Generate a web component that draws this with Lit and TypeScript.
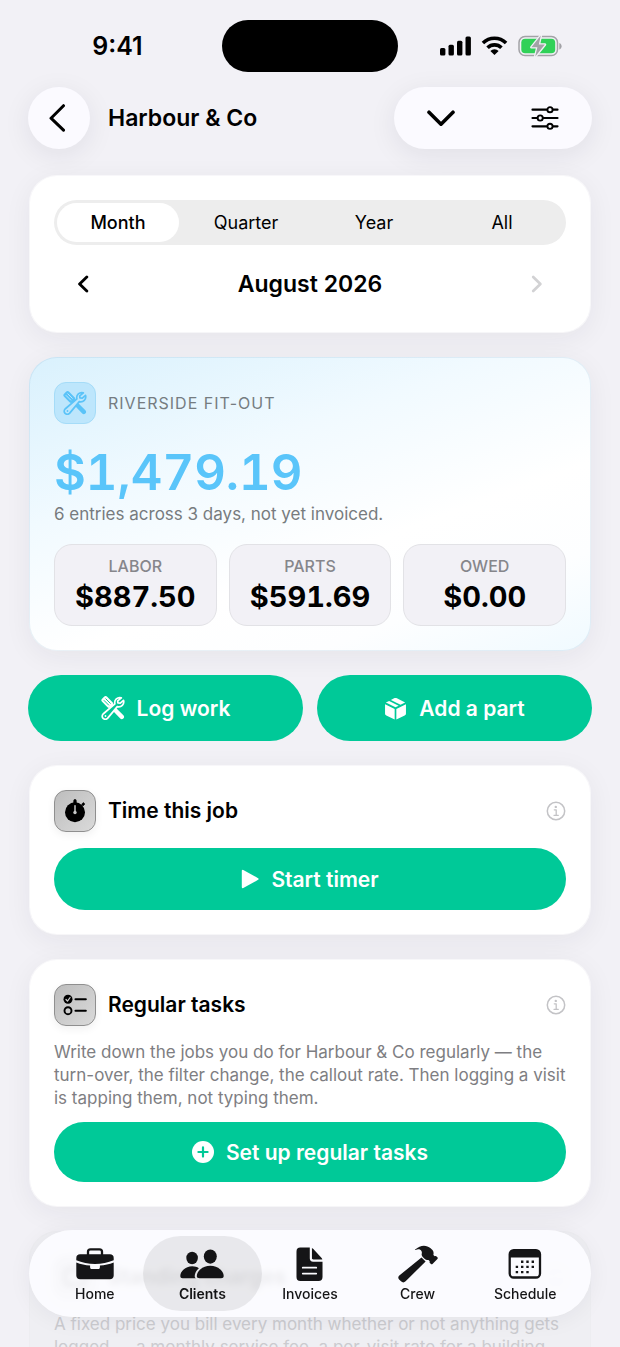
import { LitElement, html, css, svg, nothing, type TemplateResult } from "lit";
import { customElement, property, state } from "lit/decorators.js";
import { classMap } from "lit/directives/class-map.js";

const tools = svg`
  <path d="M10.6 10.6 14 14" stroke="currentColor" stroke-width="2" fill="none"/>
  <path d="M14.8 14.800 20.800 20.900" stroke="currentColor" stroke-width="4.400" stroke-linecap="round" fill="none"/>
  <g transform="rotate(45 6.300 6)">
    <rect x="0.300" y="2.400" width="12" height="7.200" rx="2.200" fill="currentColor"/>
    <path d="M3 4.800h6.400M3 7.200h6.400" fill="none" stroke="var(--cut, #fff)" stroke-width="0.900" stroke-linecap="round"/>
  </g>
  <path fill="var(--cut, #fff)" stroke="currentColor" stroke-width="1.700" stroke-linejoin="round" stroke-linecap="round"
    d="M20.400 1.900a5 5 0 0 0-6.500 6L2.100 18a3.100 3.100 0 1 0 4.400 4.400L16.300 10.600a5 5 0 0 0 6.200-6.300L19.300 7.200 16.900 6.900 16.700 4.800Z"/>
  <circle cx="4.500" cy="20" r="0.900" fill="currentColor"/>`;

const icons: Record<string, { box: string; art: TemplateResult }> = {
  signal: {
    box: "0 0 31 20",
    art: svg`<g fill="currentColor"><rect x="0" y="12" width="5.400" height="7.600" rx="1.500"/><rect x="8.500" y="8.700" width="5.400" height="10.900" rx="1.500"/><rect x="17" y="4.700" width="5.400" height="14.900" rx="1.500"/><rect x="25.500" y="0.400" width="5.400" height="19.200" rx="1.500"/></g>`,
  },
  wifi: {
    box: "0 0 28 20",
    art: svg`<g fill="none" stroke="currentColor" stroke-width="3.700"><path d="M2 7.300a17 17 0 0 1 24 0"/><path d="M6.800 12.200a10.200 10.200 0 0 1 14.400 0"/></g><path fill="currentColor" d="M14 19.800 9.700 15.500a6.200 6.200 0 0 1 8.600 0Z"/>`,
  },
  battery: {
    box: "0 0 44 22",
    art: svg`<rect x="1" y="1.500" width="38.500" height="19" rx="6" fill="none" stroke="#a2a2a6" stroke-width="1.500"/><path d="M41.300 8v6.400c1.500-.5 2.300-1.700 2.300-3.200S42.800 8.500 41.300 8Z" fill="#a2a2a6"/><rect x="3.300" y="3.800" width="33.900" height="14.400" rx="3.800" fill="#30d158"/><path d="M22.800.6 13.400 12.300h6l-2.200 9.300 9.700-12h-6.100Z" fill="#a2a2a6" stroke="#f2f1f6" stroke-width="2.600" paint-order="stroke" stroke-linejoin="round"/>`,
  },
  back: {
    box: "0 0 20 28",
    art: svg`<path d="M14.500 2.500 2 15 14.500 27" transform="translate(0 -.8)" fill="none" stroke="currentColor" stroke-width="3" stroke-linecap="round" stroke-linejoin="round"/>`,
  },
  down: {
    box: "0 0 28 17",
    art: svg`<path d="M2 2.200 14 14.200 26 2.200" fill="none" stroke="currentColor" stroke-width="3.600" stroke-linecap="round" stroke-linejoin="round"/>`,
  },
  sliders: {
    box: "0 0 28 24",
    art: svg`<g stroke="currentColor" stroke-width="2.200" stroke-linecap="round" fill="none"><path d="M1.500 3.700H16M22 3.700h4.500M1.500 12H6.300M12.300 12H26.500M1.500 20.300H16M22 20.300h4.500"/><g stroke-width="1.900"><circle cx="19" cy="3.700" r="2.600"/><circle cx="9.200" cy="12" r="2.600"/><circle cx="19" cy="20.300" r="2.600"/></g></g>`,
  },
  prev: {
    box: "0 0 12 18",
    art: svg`<path d="M9.800 2 2.600 9l7.200 7" fill="none" stroke="currentColor" stroke-width="2.900" stroke-linecap="round" stroke-linejoin="round"/>`,
  },
  next: {
    box: "0 0 12 18",
    art: svg`<path d="m2.200 2 7.200 7-7.200 7" fill="none" stroke="currentColor" stroke-width="2.700" stroke-linecap="round" stroke-linejoin="round"/>`,
  },
  tools: { box: "0 0 24 24", art: tools },
  box: {
    box: "0 0 22 22",
    art: svg`<g fill="currentColor"><path d="M1 6.900 10.200 11.400V21.600L2.200 17.600C1.400 17.200 1 16.700 1 15.800Z"/><path d="M21 6.900 11.800 11.400V21.600L19.800 17.600C20.600 17.200 21 16.700 21 15.800Z"/><path d="M1.800 5.300 4.900 3.800 14 8.300 11 9.800Z"/><path d="M6.600 2.900 9.600 1.300C10.600.8 11.400.8 12.400 1.300L20.200 5.300 15.800 7.500Z"/></g>`,
  },
  stopwatch: {
    box: "0 0 24 24",
    art: svg`<circle cx="12" cy="13.300" r="10" fill="currentColor"/><path d="M10.700 1.700a1.300 1.300 0 0 1 2.600 0V4h-2.600ZM18.600 5.300l1.700-1.800 1.600 1.500-1.800 1.900Z" fill="currentColor" stroke="currentColor" stroke-width=".6" stroke-linejoin="round"/><path d="M12 6.800v6" stroke="#c6c6c6" stroke-width="1.500" stroke-linecap="round"/><circle cx="12" cy="13.500" r="1.700" fill="#c6c6c6"/>`,
  },
  checklist: {
    box: "0 0 24 24",
    art: svg`<circle cx="5" cy="6.300" r="4.500" fill="currentColor"/><path d="m3 6.500 1.500 1.700 2.600-3.700" fill="none" stroke="#cfcfcf" stroke-width="1.200" stroke-linecap="round" stroke-linejoin="round"/><circle cx="5" cy="17.700" r="3.500" fill="none" stroke="currentColor" stroke-width="1.900"/><path d="M12.500 6.300h10.300M12.500 17.700h10.300" stroke="currentColor" stroke-width="2.100" stroke-linecap="round"/>`,
  },
  play: {
    box: "0 0 18 20",
    art: svg`<path d="M1.800 1.800v16.400L16.600 10Z" fill="currentColor" stroke="currentColor" stroke-width="2" stroke-linejoin="round"/>`,
  },
  plus: {
    box: "0 0 22 22",
    art: svg`<circle cx="11" cy="11" r="11" fill="currentColor"/><path d="M11 6.400v9.200M6.400 11h9.200" stroke="#00c998" stroke-width="2.200" stroke-linecap="round"/>`,
  },
  info: {
    box: "0 0 20 20",
    art: svg`<circle cx="10" cy="10" r="8.700" fill="none" stroke="currentColor" stroke-width="1.500"/><circle cx="9.800" cy="5.900" r="1.200" fill="currentColor"/><path d="M8.300 8.800h1.900v5.400M8 14.300h4.300" fill="none" stroke="currentColor" stroke-width="1.300" stroke-linecap="round" stroke-linejoin="round"/>`,
  },
  list: {
    box: "0 0 24 24",
    art: svg`<rect x="2" y="4" width="20" height="16" rx="4" fill="none" stroke="currentColor" stroke-width="3"/>`,
  },
  briefcase: {
    box: "0 0 38 32",
    art: svg`<path d="M12 7V3.800C12 2.300 13 1.300 14.500 1.300h9C25 1.300 26 2.300 26 3.800V7" fill="none" stroke="currentColor" stroke-width="2.300"/><path d="M4 6.300h30c2.200 0 3.700 1.400 3.700 3.600v2.400C32 14.600 25.700 16 19 16S6 14.600.3 12.300V9.900C.3 7.700 1.800 6.300 4 6.300Z" fill="currentColor"/><path d="M.3 14.400c4.400 1.700 9 2.800 13.800 3.200v1.600c0 1.200.8 1.900 1.900 1.900h6c1.100 0 1.900-.7 1.900-1.900v-1.600c4.800-.4 9.400-1.500 13.800-3.200v13c0 2.300-1.500 3.900-3.800 3.900H4.100C1.800 31.300.3 29.700.3 27.400Z" fill="currentColor"/>`,
  },
  people: {
    box: "0 0 44 30",
    art: svg`<g fill="currentColor"><ellipse cx="12.100" cy="9" rx="5.800" ry="6.200"/><ellipse cx="30.300" cy="7.600" rx="6.500" ry="7.100"/><path d="M15.800 29.300H2.600C1.200 29.300.3 28.500.3 27.100.3 22.500 5.200 17.300 12.200 17.300c2.600 0 4.800.7 6.700 1.900-2.600 2.300-4.200 5.300-4.200 8 0 .8.400 1.500 1.100 2.100Z"/><path d="M19.600 29.300C17.700 29.300 16.800 28.500 16.800 27.100c0-4.400 5.400-10.300 13.500-10.300s13.400 5.900 13.400 10.300c0 1.400-.9 2.200-2.700 2.200Z"/></g>`,
  },
  invoice: {
    box: "0 0 28 36",
    art: svg`<path d="M4.500.6h9.800v11.200c0 2.300 1.200 3.500 3.500 3.500H27.500v15.700c0 2.700-1.400 4.200-4.100 4.200H4.500C1.800 35.200.5 33.700.5 31V4.800C.5 2.100 1.800.6 4.500.6Z" fill="currentColor"/><path d="M16.500 1c.5.200 1 .6 1.500 1.100l8.300 9c.5.600.9 1.100 1 1.900H18c-1 0-1.500-.5-1.500-1.500Z" fill="currentColor"/><path d="M7 21.500h14M7 27.500h14" stroke="#fbfbfe" stroke-width="1.800" stroke-linecap="round"/>`,
  },
  hammer: {
    box: "0 0 40 38",
    art: svg`<path d="M23.500 12.500 27.600 16.400 7.600 36.300C6.300 37.700 4.500 37.800 3.300 36.600L1.100 34.500C-.1 33.300 0 31.600 1.300 30.400Z" fill="currentColor"/><path d="M17.200 4.600C22.400-.4 28.500-.2 32.600 3.200l1.600 1.500c1.200 1.300 1.600 2.600 1.300 4.300l-.1 1 1.300 1.200c.7-.5 1.300-.4 1.900.2l.8.900c.5.500.5 1.100 0 1.600l-4.900 5c-.5.500-1.100.5-1.600 0l-.9-.9c-.6-.6-.7-1.200-.2-1.800l-1.300-1.300c-1.500.4-2.700.1-3.700-.9l-2.100-2c-1-1-1.300-2.200-.9-3.600.3-1.700-.3-2.800-1.600-3.600-1.300-.6-2.800-.6-4.600.2-.7.3-1-.1-.4-.4Z" fill="currentColor"/>`,
  },
  calendar: {
    box: "0 0 34 30",
    art: svg`<rect x="1.700" y="1.200" width="30.300" height="27.300" rx="4" fill="none" stroke="currentColor" stroke-width="2.300"/><path d="M1.700 8.500V4.600c0-2 1.500-3.400 3.600-3.400h23.100c2.100 0 3.600 1.400 3.600 3.400v3.900Z" fill="currentColor"/><g fill="currentColor"><path d="M13 11.500h2.400v2.400H13zM18.300 11.500h2.400v2.400h-2.400zM23.600 11.500H26v2.400h-2.400zM7.700 16.700h2.400v2.400H7.700zM13 16.700h2.400v2.400H13zM18.300 16.700h2.400v2.400h-2.400zM23.600 16.700H26v2.400h-2.400zM7.700 21.900h2.400v2.400H7.700zM13 21.900h2.400v2.400H13zM18.300 21.900h2.400v2.400h-2.400z"/></g>`,
  },
};

@customElement("job-icon")
class JobIcon extends LitElement {
  @property() name = "";
  @property({ type: Number }) size = 24;

  static styles = css`
    :host {
      display: inline-flex;
      flex: none;
    }
  `;

  render() {
    const icon = icons[this.name];
    if (!icon) return nothing;
    const [, , w, h] = icon.box.split(" ").map(Number);
    return html`<svg width=${this.size} height=${(this.size * h) / w} viewBox=${icon.box} aria-hidden="true">${icon.art}</svg>`;
  }
}

const periods = ["Month", "Quarter", "Year", "All"];

const stats = [
  { label: "Labor", value: "$887.50" },
  { label: "Parts", value: "$591.69" },
  { label: "Owed", value: "$0.00" },
];

const tabs = [
  { label: "Home", icon: "briefcase", size: 38 },
  { label: "Clients", icon: "people", size: 44 },
  { label: "Invoices", icon: "invoice", size: 27 },
  { label: "Crew", icon: "hammer", size: 40 },
  { label: "Schedule", icon: "calendar", size: 34 },
];

@customElement("app-root")
class AppRoot extends LitElement {
  @state() private period = "Month";
  @state() private tab = "Clients";

  static styles = css`
    :host {
      display: block;
      height: 100vh;
      overflow: hidden;
      background: #f2f1f6;
      color: #000;
      font-family: Inter, "Liberation Sans", sans-serif;
      -webkit-font-smoothing: antialiased;
    }
    * {
      box-sizing: border-box;
    }
    h1,
    h2,
    p,
    dl,
    dd {
      margin: 0;
    }
    button {
      font: inherit;
      color: inherit;
      border: 0;
      padding: 0;
      background: none;
      cursor: pointer;
    }
    .screen {
      height: 100%;
      overflow-y: auto;
      scrollbar-width: none;
      padding: 20px 0 0;
    }
    .status {
      display: grid;
      grid-template-columns: 1fr 176px 1fr;
      align-items: center;
      padding: 0 13px;
    }
    .time {
      text-align: center;
      font-size: 25px;
      font-weight: 600;
    }
    .island {
      height: 52px;
      border-radius: 26px;
      background: #000;
    }
    .radios {
      display: flex;
      align-items: center;
      justify-content: center;
      gap: 10px;
      padding-right: 3px;
    }
    .bar {
      display: flex;
      align-items: center;
      gap: 18px;
      padding: 15px 28px 26px;
    }
    .bar h1 {
      flex: 1;
      font-size: 23px;
      line-height: 30px;
      font-weight: 600;
    }
    .glass {
      display: flex;
      align-items: center;
      justify-content: center;
      height: 62px;
      border-radius: 31px;
      background: #fbfaff;
      box-shadow: 0 6px 28px rgba(30, 30, 50, 0.08);
    }
    .round {
      width: 62px;
    }
    .pair {
      width: 198px;
      justify-content: space-between;
      padding: 0 17px;
    }
    .pair button {
      display: flex;
      justify-content: center;
      width: 60px;
      padding: 16px 0;
    }
    .stack {
      display: flex;
      flex-direction: column;
      gap: 24px;
      padding: 0 29px 24px;
    }
    .card {
      border: 1px solid rgba(255, 255, 255, 0.6);
      border-radius: 28px;
      background: #fff;
      background-clip: padding-box;
      padding: 24px;
      box-shadow: 0 6px 28px rgba(30, 30, 50, 0.06);
    }
    .segments {
      display: grid;
      grid-template-columns: repeat(4, 1fr);
      height: 45px;
      padding: 3px 0;
      border-radius: 23px;
      background: #ededed;
    }
    .segment {
      border-radius: 20px;
      font-size: 18px;
      font-weight: 400;
      margin: 0 3px;
    }
    .segment.on {
      background: #fff;
      font-weight: 500;
    }
    .stepper {
      display: flex;
      align-items: center;
      justify-content: space-between;
      height: 48px;
      margin-top: 15px;
    }
    .stepper h2 {
      font-size: 23px;
      font-weight: 600;
    }
    .stepper button {
      display: flex;
      justify-content: center;
      align-items: center;
      width: 58px;
      height: 48px;
    }
    .stepper button:disabled {
      color: #d2d2d4;
    }
    .hero {
      border-color: rgba(80, 140, 180, 0.12);
      background: linear-gradient(160deg, #d9f1fd 0%, #f1faff 34%, #ffffff 62%, #fdfeff 80%, #f0faff 100%) border-box;
    }
    .head {
      display: flex;
      align-items: center;
      gap: 12px;
    }
    .head h2 {
      flex: 1;
      font-size: 21px;
      line-height: 28px;
      font-weight: 600;
    }
    .head .eyebrow {
      font-size: 16px;
      font-weight: 400;
      letter-spacing: 1px;
      text-transform: uppercase;
      color: #757c81;
    }
    .tile {
      display: flex;
      align-items: center;
      justify-content: center;
      width: 42px;
      height: 42px;
      border-radius: 12px;
      border: 1px solid #8f8f8f;
      background: linear-gradient(135deg, #bdbdbd, #dadada);
      box-shadow: 0 3px 8px rgba(0, 0, 0, 0.06);
    }
    .tile.blue {
      --cut: #bde6fc;
      color: #5ac3f8;
      border-color: #a5dcf8;
      background: #bde6fc;
      box-shadow: none;
    }
    .amount {
      margin-top: 20px;
      font-size: 49px;
      line-height: 58px;
      font-weight: 600;
      font-variant-numeric: tabular-nums;
      color: #5ac5fa;
    }
    .note {
      font-size: 17px;
      line-height: 24px;
      color: #777b7e;
    }
    .stats {
      display: grid;
      grid-template-columns: repeat(3, 1fr);
      gap: 12px;
      margin-top: 18px;
    }
    .stat {
      padding: 11px 4px;
      border: 1px solid #e2e2e6;
      border-radius: 18px;
      background: #f2f1f6;
      text-align: center;
    }
    .stat dt {
      font-size: 16px;
      line-height: 20px;
      font-weight: 500;
      text-transform: uppercase;
      color: #86868b;
    }
    .stat dd {
      margin-top: 4px;
      font-size: 29px;
      line-height: 34px;
      font-weight: 700;
      font-variant-numeric: tabular-nums;
    }
    .actions {
      display: grid;
      grid-template-columns: 1fr 1fr;
      gap: 14px;
      margin: 0 -1px;
    }
    .primary {
      display: flex;
      align-items: center;
      justify-content: center;
      gap: 12px;
      width: 100%;
      height: 60px;
      border-radius: 33px;
      background: #00c998;
      color: #fff;
      --cut: #00c998;
      font-size: 21px;
      font-weight: 600;
    }
    .actions .primary {
      height: 66px;
    }
    .info {
      display: flex;
      color: #c3c3c6;
    }
    .timer {
      margin-top: 16px;
      height: 62px;
    }
    .copy {
      margin-top: 15px;
      font-size: 17px;
      line-height: 23px;
      color: #7e7e82;
    }
    .copy + .primary {
      margin-top: 12px;
    }
    .under {
      background: #efeff3;
      border-color: #ededf1;
      box-shadow: none;
    }
    .under .copy {
      color: #cbcbcf;
    }
    .tabs {
      position: fixed;
      left: 29px;
      right: 29px;
      bottom: 30px;
      display: grid;
      grid-template-columns: repeat(5, 1fr);
      height: 87px;
      padding: 6px 12px;
      border-radius: 44px;
      background: rgba(252, 252, 255, 0.93);
      backdrop-filter: blur(3px);
      box-shadow: 0 2px 24px rgba(30, 30, 50, 0.06);
      color: #151517;
    }
    .tab {
      position: relative;
      display: flex;
      flex-direction: column;
      align-items: center;
      font-size: 14px;
      line-height: 18px;
      font-weight: 500;
      color: inherit;
      text-decoration: none;
    }
    .tab.on {
      font-weight: 600;
    }
    .tab.on::before {
      content: "";
      position: absolute;
      inset: 0 -6px;
      border-radius: 38px;
      background: rgba(0, 0, 0, 0.075);
    }
    .glyph {
      display: flex;
      align-items: center;
      justify-content: center;
      height: 42px;
      margin: 7px 0 0;
    }
  `;

  private card(icon: string, title: string, size: number) {
    return html`<div class="head">
      <span class="tile"><job-icon name=${icon} size=${size}></job-icon></span>
      <h2>${title}</h2>
      <button class="info" aria-label="About ${title}"><job-icon name="info" size="20"></job-icon></button>
    </div>`;
  }

  render() {
    return html`
      <div class="screen">
        <div class="status">
          <span class="time">9:41</span>
          <span class="island"></span>
          <span class="radios">
            <job-icon name="signal" size="31"></job-icon>
            <job-icon name="wifi" size="27"></job-icon>
            <job-icon name="battery" size="44"></job-icon>
          </span>
        </div>
        <header class="bar">
          <button class="glass round" aria-label="Back"><job-icon name="back" size="20"></job-icon></button>
          <h1>Harbour &amp; Co</h1>
          <div class="glass pair">
            <button aria-label="More"><job-icon name="down" size="28"></job-icon></button>
            <button aria-label="Filters"><job-icon name="sliders" size="28"></job-icon></button>
          </div>
        </header>
        <main class="stack">
          <section class="card">
            <div class="segments" role="group" aria-label="Period">
              ${periods.map(
                (p) => html`<button
                  class=${classMap({ segment: true, on: p === this.period })}
                  aria-pressed=${p === this.period}
                  @click=${() => (this.period = p)}
                >${p}</button>`
              )}
            </div>
            <div class="stepper">
              <button aria-label="Previous month"><job-icon name="prev" size="12"></job-icon></button>
              <h2>August 2026</h2>
              <button aria-label="Next month" disabled><job-icon name="next" size="12"></job-icon></button>
            </div>
          </section>

          <section class="card hero">
            <div class="head">
              <span class="tile blue"><job-icon name="tools" size="24"></job-icon></span>
              <h2 class="eyebrow">Riverside fit-out</h2>
            </div>
            <p class="amount">$1,479.19</p>
            <p class="note">6 entries across 3 days, not yet invoiced.</p>
            <dl class="stats">
              ${stats.map((s) => html`<div class="stat"><dt>${s.label}</dt><dd>${s.value}</dd></div>`)}
            </dl>
          </section>

          <div class="actions">
            <button class="primary"><job-icon name="tools" size="24"></job-icon>Log work</button>
            <button class="primary"><job-icon name="box" size="23"></job-icon>Add a part</button>
          </div>

          <section class="card">
            ${this.card("stopwatch", "Time this job", 24)}
            <button class="primary timer"><job-icon name="play" size="18"></job-icon>Start timer</button>
          </section>

          <section class="card">
            ${this.card("checklist", "Regular tasks", 24)}
            <p class="copy">
              Write down the jobs you do for Harbour &amp; Co regularly — the turn-over, the filter change, the callout
              rate. Then logging a visit is tapping them, not typing them.
            </p>
            <button class="primary"><job-icon name="plus" size="22"></job-icon>Set up regular tasks</button>
          </section>

          <section class="card under">
            ${this.card("list", "Standing charges", 24)}
            <p class="copy">
              A fixed price you bill every month whether or not anything gets logged — a monthly service fee, a
              per-visit rate for a building.
            </p>
          </section>
        </main>
      </div>
      <nav class="tabs" aria-label="Main">
        ${tabs.map(
          (t) => html`<a
            href="#${t.label.toLowerCase()}"
            class=${classMap({ tab: true, on: t.label === this.tab })}
            @click=${() => (this.tab = t.label)}
          ><span class="glyph"><job-icon name=${t.icon} size=${t.size}></job-icon></span>${t.label}</a>`
        )}
      </nav>
    `;
  }
}
